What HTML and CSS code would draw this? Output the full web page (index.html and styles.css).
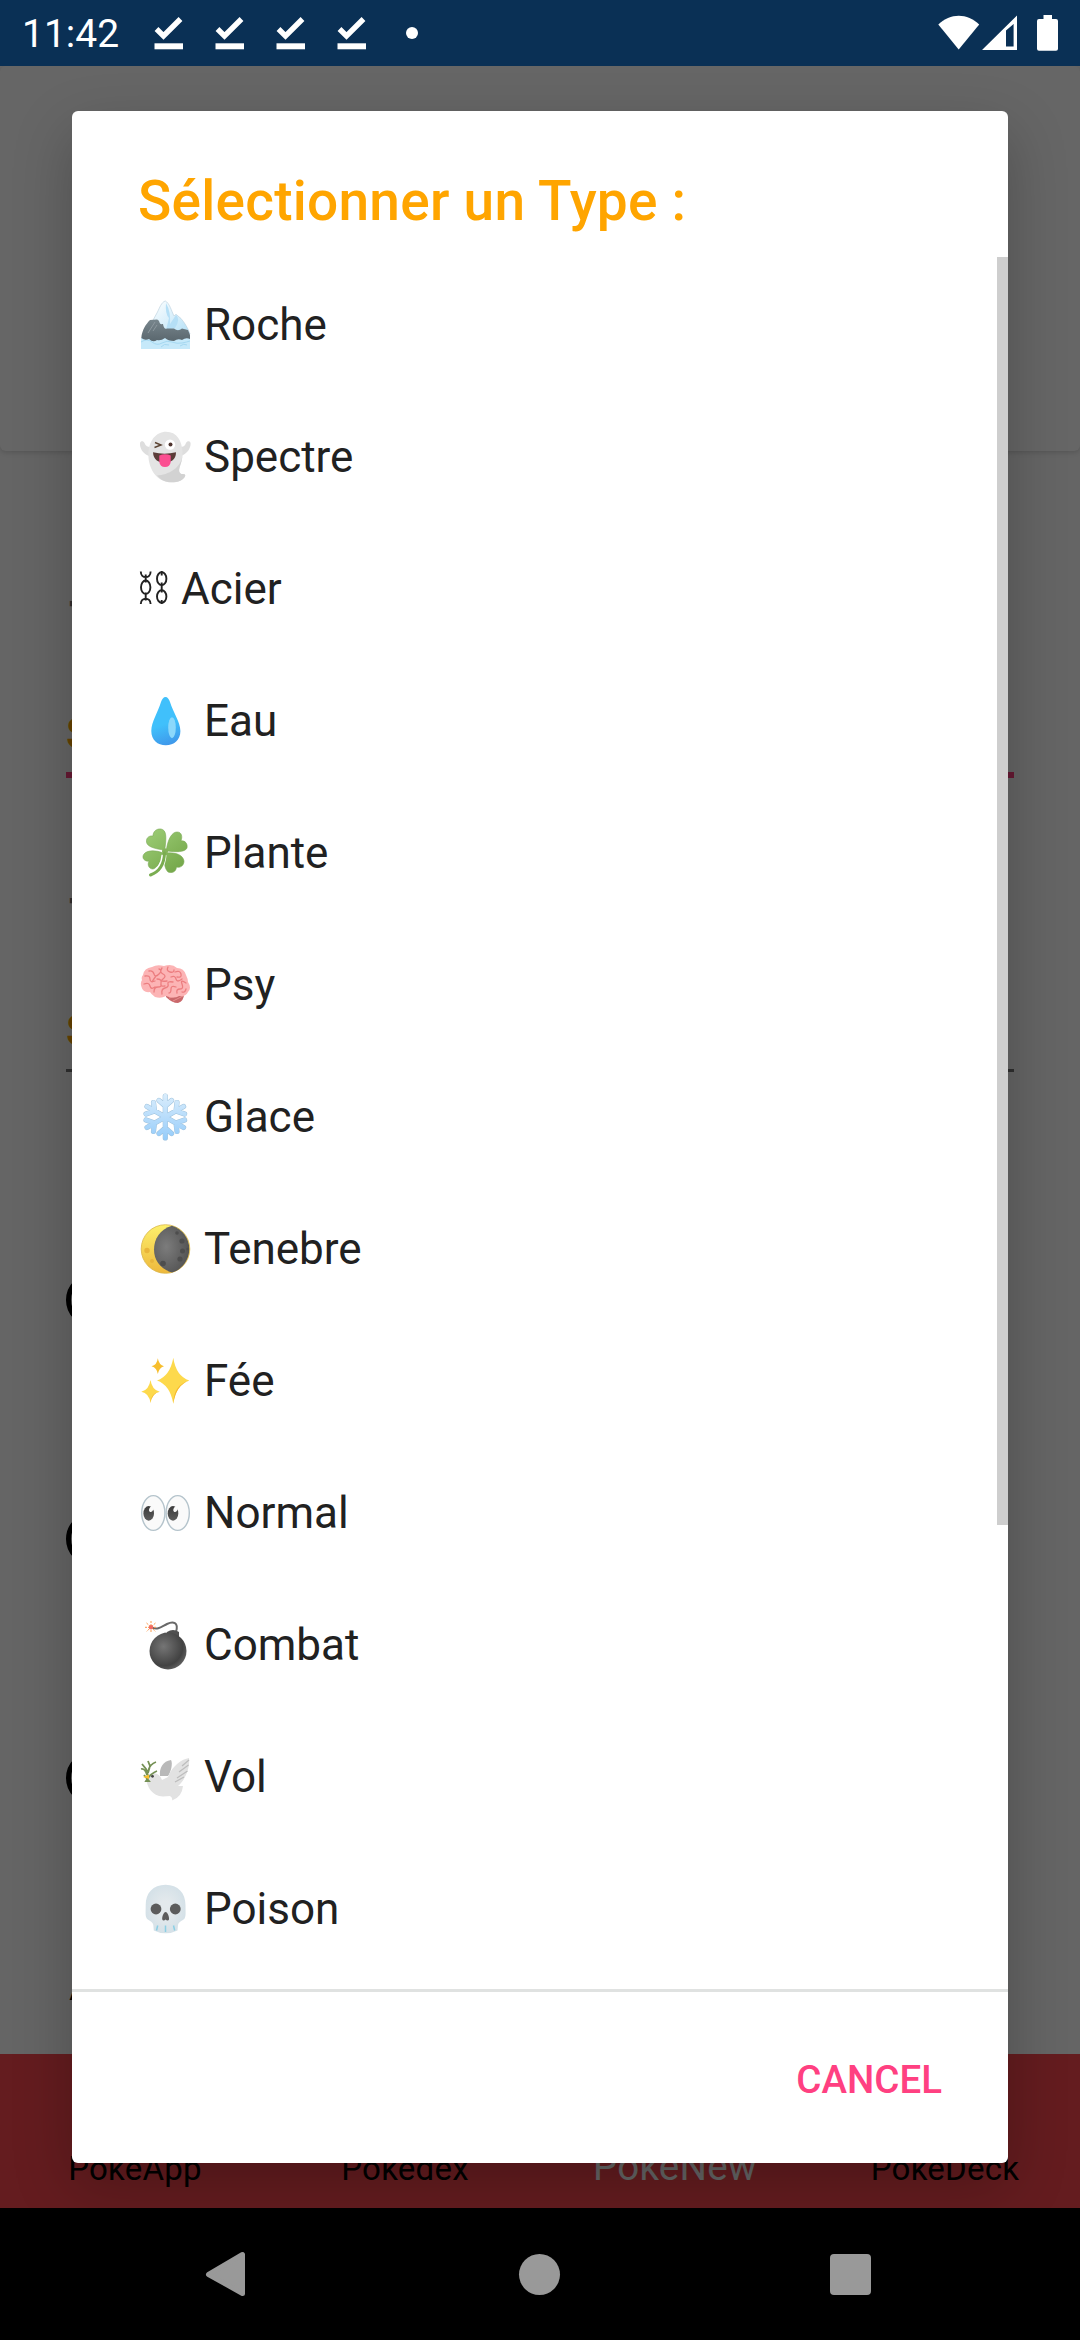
FILE: index.html
```html
<!DOCTYPE html>
<html lang="fr">
<head>
<meta charset="utf-8">
<title>PokeApp</title>
<link rel="stylesheet" href="styles.css">
</head>
<body>
<svg class="defs" aria-hidden="true">
  <defs>
    <symbol id="done" viewBox="0 0 30 36"><path d="M2.500 14 9.500 21 26.500 4" fill="none" stroke="#fff" stroke-width="5.400"/><path d="M.5 28.300h28.500v6H.5z" fill="#fff"/></symbol>
    <linearGradient id="gIce" x1="0" y1="0" x2="1" y2="1"><stop offset="0" stop-color="#fff"/><stop offset="1" stop-color="#b3e0f7"/></linearGradient>
    <linearGradient id="gRock" x1="0" y1="0" x2="0" y2="1"><stop offset="0" stop-color="#78868d"/><stop offset="1" stop-color="#5a676e"/></linearGradient>
    <linearGradient id="gDrop" x1="0.400" y1="0" x2="0.600" y2="1"><stop offset=".55" stop-color="#40c0fb"/><stop offset="1" stop-color="#3f97ea"/></linearGradient>
    <linearGradient id="gLeaf" gradientUnits="userSpaceOnUse" x1="8" y1="4" x2="42" y2="46"><stop offset="0" stop-color="#9ccc75"/><stop offset="1" stop-color="#72a547"/></linearGradient>
    <linearGradient id="gSnow" gradientUnits="userSpaceOnUse" x1="0" y1="2" x2="0" y2="50"><stop offset="0" stop-color="#dceefc"/><stop offset="1" stop-color="#93cbfa"/></linearGradient>
    <linearGradient id="gMoon" x1="0" y1="0" x2="0" y2="1"><stop offset="0" stop-color="#fdf06c"/><stop offset="1" stop-color="#eeb83c"/></linearGradient>
    <radialGradient id="gDark" cx=".35" cy=".45" r=".7"><stop offset="0" stop-color="#7c7c7c"/><stop offset="1" stop-color="#515151"/></radialGradient>
    <radialGradient id="gBomb" cx=".38" cy=".38" r=".65"><stop offset="0" stop-color="#757575"/><stop offset=".8" stop-color="#424242"/><stop offset="1" stop-color="#5c5c5c"/></radialGradient>
    <radialGradient id="gSkull" cx=".5" cy=".5" r=".55"><stop offset=".3" stop-color="#e3e9ec"/><stop offset="1" stop-color="#d3e0e7"/></radialGradient>
    <linearGradient id="gPupil" x1="0" y1="0" x2="0" y2="1"><stop offset="0" stop-color="#3c3c3c"/><stop offset="1" stop-color="#5c5c5c"/></linearGradient>
  </defs>
</svg>

<header class="status">
  <span class="clock">11:42</span>
  <div class="notifs">
    <svg class="done"><use href="#done"/></svg>
    <svg class="done"><use href="#done"/></svg>
    <svg class="done"><use href="#done"/></svg>
    <svg class="done"><use href="#done"/></svg>
    <span class="more"></span>
  </div>
  <svg class="signals" viewBox="938 14 121 38" fill="#fff">
    <path d="M938.300 24.500C950 12.700 967.500 12.700 979.200 24.500L958.700 49.500z"/>
    <path fill-rule="evenodd" d="M982 50 1017 15.500V50zM1006 30.500V46.500H1013.600V24z"/>
    <path d="M1043.500 15h8.500v4h4q2 0 2 2v27.700q0 2-2 2h-17q-2 0-2-2V21q0-2 2-2h4.500z"/>
  </svg>
</header>

<main class="app">
  <section class="hero"></section>
  <section class="form">
    <div class="label">T</div>
    <div class="field active">S</div>
    <div class="label second">T</div>
    <div class="field">S</div>
    <div class="radios"><span class="radio"></span><span class="radio"></span><span class="radio"></span></div>
    <div class="add">A</div>
  </section>
  <nav class="tabs">
    <span class="tab">PokeApp</span>
    <span class="tab">Pokedex</span>
    <span class="tab current">PokeNew</span>
    <span class="tab">PokeDeck</span>
  </nav>

  <div class="scrim">
    <div class="dialog" role="dialog">
      <h1 class="title">Sélectionner un Type :</h1>
      <ul class="list">
        <li class="row"><svg class="emoji" viewBox="0 0 52 52">
          <path d="M2 39 2 50H51V38z" fill="#c6e9fa"/>
          <path d="M2 43q6-4 11 0t10 1 10-1 10 1 8-2M22 48q3-4 8-2M41 47q4-3 7-1" fill="none" stroke="#a5d8f1" stroke-width="1"/>
          <path d="M26.300 2C22.500 3 20.500 9 18.500 13L13 23 25 34 51 35C49 29 45 23 42 19.500L37 15.300 35 17C32.500 12 30.500 4 26.300 2z" fill="url(#gIce)" stroke="#bed3df" stroke-width=".7"/>
          <path d="M27 4Q26 15 30 19L27 31 36 29Q42 20 37 16L31 25Q32 13 27 4z" fill="#b5dff6"/>
          <path d="M2.300 39C3 31 7 25 11 21L18 20.500C22 22 19 26 24 25Q25 31 28 29.500L35 29.500Q39 33 43 29.500L49 31 51 36V40Q47 38 43 41 39 39 35 42 29 42 26 39 22 42 18 41 14 44 10 40 6 42 2.300 39z" fill="url(#gRock)"/>
          <path d="M9 34 16 23M14 32 18 26" stroke="#8d989e" stroke-width="1"/>
        </svg>Roche</li>
        <li class="row"><svg class="emoji" viewBox="0 0 52 52">
          <path d="M10 25C4 23 .5 17 1 12 1.600 9.500 4.500 9.500 5.500 12 6.500 15 9 16 11 16zM42 25C48 23 52 17 51.600 12 51 9.500 48 9.500 47 12 46 15 44 16 41 16z" fill="#dedede"/>
          <path d="M27 .8C38 .8 43 10 43.500 21 44 32 38 38 41 42 42.500 44 46 42 46.300 44.500 45 49.500 38 51.500 32 51.300 17 51 9.500 37 9.400 24 9.400 10 17 .8 27 .8z" fill="#e4e4e4"/>
          <path d="M43.500 23C43 37 29 44 18 44.500 22 49 26 51.300 32 51.300 38 51.500 45 49.500 46.300 44.500 46 42 42.500 44 41 42 38 38 43.500 33 43.500 23z" fill="#d2d2d2"/>
          <circle cx="31" cy="13.600" r="5.200" fill="#fff"/><circle cx="31.500" cy="13.600" r="2" fill="#4e342e"/>
          <path d="M16 11.500 22 14 15.500 16.500" fill="none" stroke="#5b4332" stroke-width="1.400"/>
          <path d="M14 21.300Q25.500 24 37 21.300C37 29 32 31.500 25.500 31.500S14.500 29 14 21.300z" fill="#5b3c38"/>
          <path d="M20.300 24.500Q26 22 31.700 24.500V31Q31 36 26 36T20.300 31z" fill="#fb4f91"/>
        </svg>Spectre</li>
        <li class="row"><svg class="emoji chains" viewBox="0 0 29 52" fill="none" stroke="#212121" stroke-width="1.900">
          <path d="M1.800 8.500C1.800 16 11.600 16 11.600 8.500M6.700 11.500V19.500M6.700 29.500V37.500M1.800 41C1.800 34 11.600 34 11.600 41M22.700 8V12.500M22.700 19.500V29.500M22.700 37V41"/>
          <ellipse cx="6.700" cy="24.200" rx="4.700" ry="6.700"/><ellipse cx="22.700" cy="15.700" rx="4.700" ry="6.400"/><ellipse cx="22.700" cy="33.500" rx="4.700" ry="6.200"/>
        </svg>Acier</li>
        <li class="row"><svg class="emoji" viewBox="0 0 52 52">
          <path d="M26.500 2C28.500 2 30 4 31 7 34 17 41.400 27 41.400 36 41.400 45 35 50.300 26.800 50.300S12.300 45 12.300 36C12.300 27 19 17 22 7 23 4 24.500 2 26.500 2z" fill="url(#gDrop)"/>
          <ellipse cx="33" cy="32.700" rx="3.800" ry="10.500" fill="#8bd8fb"/>
        </svg>Eau</li>
        <li class="row"><svg class="emoji" viewBox="0 0 52 52">
          <g fill="url(#gLeaf)" stroke="#7aa956" stroke-width=".6">
          <path d="M25 23C17 22 8 20 7.500 15 7 10 11 8.500 14 9 14 4 18 1.500 22 2 27.500 3 27.500 10 26 21z"/>
          <path d="M27.500 22C29 12 33 5 38 5 43 5 43.500 10 42 14 46 13 49 17 48 21 46 25.500 36 25 28 24z"/>
          <path d="M24 26C17 23 8 23 5 27 2 31 6 35 10 34 8 38 10 42 14 42 19 41 22 33 25 27z"/>
          <path d="M27 26C37 25 44 28 45 34 45 39 41 41 37.500 40 37 45 33 46.500 29 45 25 41 25 34 26 26z"/></g>
          <circle cx="26" cy="24.300" r="3" fill="#84b45b"/>
          <path d="M25 28Q24 43 11 48" fill="none" stroke="#fff" stroke-width="5"/>
          <path d="M25.500 26Q25 43 11.500 48" fill="none" stroke="#7aad51" stroke-width="3" stroke-linecap="round"/>
        </svg>Plante</li>
        <li class="row"><svg class="emoji" viewBox="0 0 52 52">
          <path d="M27 37Q35 37 45 35 45 42 39 44 33 44 27 38z" fill="#c9686b"/><path d="M30 39 42 36M34 42 44 37" stroke="#e98e8e" stroke-width="1"/>
          <path d="M4 16Q5 9 13 8 18 5 25 7 33 4 38 9 45 9 47 16 49 20 49 23 53 29 49 33 47 38 40 37 35 40 27 37 22 40 16 38 12 35 11 33 4 34 2.500 28 1 24 3 21 2 18 4 16z" fill="#fcb4b5"/>
          <g fill="none" stroke="#ec7e80" stroke-width="1.300" stroke-linecap="round"><path d="M6 17q5-1 5 3t5 2M10 12q4-1 5 3t5 0 0-5M23 9q-3 4 1 6t0 5 4 2M29 8q-2 4 2 5t4-2M36 13q5-2 6 2t-4 3M32 18q4-2 5 2t6 0M5 25q5-2 6 2t5 1M18 20q5 0 4 4t4 3M15 33q0-5 4-5t3-3M23 35q-1-5 3-6t3-4 5-2M30 34q2 0 2-4t5-2M38 34q-1-4 3-4t2-5 4-1M17 17q-3 4-4 6M43 33q3 1 4-3"/></g>
        </svg>Psy</li>
        <li class="row"><svg class="emoji" viewBox="0 0 52 52">
          <g fill="none" stroke-linecap="round" stroke-linejoin="round">
          <path d="M26.300 5V47M8 15.500 44.600 36.500M8 36.500 44.600 15.500M20 9.500 26.300 15 32.600 9.500M20 42.500 26.300 37 32.600 42.500M7 23 15.500 20 14.500 11.500M45.600 29 37 32 38 40.500M7 29 15.500 32 14.500 40.500M45.600 23 37 20 38 11.500" stroke="#9fc2dc" stroke-width="5.200"/>
          <path d="M26.300 5V47M8 15.500 44.600 36.500M8 36.500 44.600 15.500M20 9.500 26.300 15 32.600 9.500M20 42.500 26.300 37 32.600 42.500M7 23 15.500 20 14.500 11.500M45.600 29 37 32 38 40.500M7 29 15.500 32 14.500 40.500M45.600 23 37 20 38 11.500" stroke="url(#gSnow)" stroke-width="4.300"/></g>
        </svg>Glace</li>
        <li class="row"><svg class="emoji" viewBox="0 0 52 52">
          <circle cx="26.500" cy="26" r="24.300" fill="url(#gMoon)" stroke="#d9b64a" stroke-width=".8"/>
          <circle cx="8" cy="27.500" r="2.700" fill="#e9b53b"/><circle cx="13" cy="38" r="2" fill="#e9b53b"/>
          <path d="M33 2.700A24.500 24.500 0 0 1 33 49.500C21 46 15 37 15 26.500 15 16 21 6 33 2.700z" fill="url(#gDark)"/>
          <g fill="#4d4d4d"><circle cx="38" cy="10" r="1.800"/><circle cx="43" cy="18" r="2.600"/><circle cx="43.500" cy="28" r="2.500"/><circle cx="41" cy="36" r="2.600"/><circle cx="24" cy="40.500" r="2.800"/><circle cx="48.500" cy="26" r="1.200"/></g>
        </svg>Tenebre</li>
        <li class="row"><svg class="emoji" viewBox="0 0 52 52">
          <path d="M34.300 2.700Q37 21 50.300 25.500 37 30 34.300 48.700 31 30 18 25.500 31 21 34.300 2.700z" fill="#fdd94c"/>
          <path d="M50.300 25.500Q37 30 34.300 48.700 34.500 30 50.300 25.500z" fill="#f5b62c"/>
          <path d="M11.500 25Q13 35 20.700 36.700 13 38 11.500 48 10 38 2.300 36.700 10 35 11.500 25z" fill="#fdd94c"/><path d="M20.700 36.700Q13 38 11.500 48 11.500 38 20.700 36.700z" fill="#f5b62c"/>
          <path d="M18.800 3.300Q20 10 25 11.300 20 13 18.800 19 18 13 12.500 11.300 18 10 18.800 3.300z" fill="#f7be2d"/>
        </svg>Fée</li>
        <li class="row"><svg class="emoji" viewBox="0 0 52 52">
          <g fill="#fafafa" stroke="#b5c4cc" stroke-width="1.400"><ellipse cx="14.300" cy="26" rx="11.600" ry="17.400"/><ellipse cx="38.700" cy="26" rx="11.600" ry="17.400"/></g>
          <g fill="url(#gPupil)"><ellipse cx="9.700" cy="26.400" rx="5.300" ry="7.300"/><ellipse cx="34" cy="26.400" rx="5.300" ry="7.300"/></g>
          <g fill="#fafafa"><ellipse cx="12.300" cy="22.200" rx="2" ry="3" transform="rotate(25 12.300 22.200)"/><ellipse cx="36.600" cy="22.200" rx="2" ry="3" transform="rotate(25 36.600 22.200)"/></g>
        </svg>Normal</li>
        <li class="row"><svg class="emoji" viewBox="0 0 52 52">
          <path d="M37 13C40 3 34 2 28 5 22 8 19 11 13 8.500" fill="none" stroke="#686868" stroke-width="2"/>
          <path d="M28 13Q34 9 40 13V20H28z" fill="#505050"/><circle cx="29" cy="32" r="18.500" fill="url(#gBomb)"/>
          <path d="M12 2V14M6 8.300H18M7.500 4 16.500 12.500M16.500 4 7.500 12.500" stroke="#fb9a4b" stroke-width="1" stroke-dasharray="2 1"/><circle cx="12" cy="8.300" r="2.200" fill="#f26a62"/>
        </svg>Combat</li>
        <li class="row"><svg class="emoji" viewBox="0 0 52 52">
          <path d="M21 25C20 17 24 10 32 9 34 12 32 21 29 25z" fill="#b9b9b9"/>
          <path d="M50 7C43 8 33 15 29 26L23 29Q20 21 13 22.500 8 23 7 27C8 36 13 45 24 45.500L31 45Q34 47 33 49.500 43 46 44 35L39 35C48 27 51 15 50 7z" fill="#e2e2e2"/>
          <path d="M49.500 14 40 21M48.500 20 38 27M45 26 36 31M50 9 43 15" stroke="#bdbdbd" stroke-width="1.300"/>
          <path d="M5 24 10 30 7 30Q12 22 18 20M3 13 7 18 9 25M9 10 11 15 9 22M17 11Q11 13 9 20M2 18Q6 17 8 24M8 27 8 31" fill="none" stroke="#759155" stroke-width="1.800"/>
          <path d="M4 26 10 23.500V28z" fill="#fbc02d"/><circle cx="13.500" cy="25.300" r="1.400" fill="#424242"/>
        </svg>Vol</li>
        <li class="row"><svg class="emoji" viewBox="0 0 52 52">
          <path d="M26.600 1.700C39 1.700 46.500 10 46.500 22 46.500 29 47 32 46 34.500 45 38 39.500 38 39 42L38.500 47.500Q33 50.300 26.600 50.300T14.800 47.500L14.300 42C14 38 8.500 38 7.300 34.500 6.300 32 6.700 29 6.700 22 6.700 10 14 1.700 26.600 1.700z" fill="url(#gSkull)"/>
          <path d="M18.700 42.500 17.500 47.500M26.500 42.500V49M34.500 42.500 35.700 47.500" stroke="#8ccfe4" stroke-width="1.500"/>
          <circle cx="17" cy="26" r="5.400" fill="#5c5c5c"/><circle cx="36.300" cy="26" r="5.400" fill="#5c5c5c"/>
          <path d="M26.600 29C28.500 29 30.500 34 30 36.500 29.500 38 27.500 37.500 26.600 36.500 25.700 37.500 23.700 38 23.300 36.500 22.800 34 24.700 29 26.600 29z" fill="#5c5c5c"/>
        </svg>Poison</li>
      </ul>
      <span class="thumb"></span>
      <footer class="actions"><button class="cancel">CANCEL</button></footer>
    </div>
  </div>
</main>

<footer class="sysnav">
  <svg class="key" viewBox="0 0 44 48"><path d="M4.500 24.500 38.500 4.500V43.500z" fill="#999" stroke="#999" stroke-width="5" stroke-linejoin="round"/></svg>
  <span class="home"></span>
  <span class="recent"></span>
</footer>
</body>
</html>
```
FILE: styles.css
```css
* { box-sizing: border-box; }
body { margin: 0; width: 1080px; height: 2340px; display: flex; flex-direction: column; overflow: hidden; font-family: Roboto, sans-serif; background: #000; }
.defs { position: absolute; width: 0; height: 0; }

.status { height: 66px; flex: none; background: #0a3055; color: #fff; display: flex; align-items: center; padding: 0 21px 0 22px; }
.clock { font-size: 39px; line-height: 66px; width: 132px; padding-top: 2px; }
.notifs { display: flex; align-items: center; gap: 31px; flex: 1; }
.done { width: 30px; height: 36px; }
.more { width: 12px; height: 12px; border-radius: 50%; background: #fff; margin-left: 8px; }
.signals { width: 121px; height: 38px; }

.app { position: relative; height: 2142px; flex: none; overflow: hidden; background: #fcfcfc; display: flex; flex-direction: column; }
.hero { height: 385px; flex: none; background: #fff; border-radius: 6px; box-shadow: 0 2px 5px rgba(0, 0, 0, .14); }
.form { flex: 1; display: flex; flex-direction: column; padding: 141px 66px 0; font-size: 44px; }
.label { padding-left: 3px; height: 116px; line-height: 52px; font-weight: 700; color: #757575; }
.label.second { margin-top: 111px; }
.field { height: 67px; line-height: 52px; color: #ffa500; font-weight: 700; border-bottom: 3px solid #757575; }
.field.active { height: 70px; border-bottom: 6px solid #ff4081; }
.radios { display: flex; flex-direction: column; gap: 185px; padding-top: 201px; }
.radio { width: 54px; height: 54px; border: 5px solid #000; border-radius: 50%; }
.add { padding: 154px 0 0 3px; line-height: 52px; color: #000; }

.tabs { height: 154px; flex: none; background: #fa464e; display: flex; align-items: baseline; padding-top: 93px; font-size: 33px; line-height: 39px; color: #000; }
.tab { flex: 1; text-align: center; letter-spacing: .25px; }
.tab.current { font-size: 38.500px; color: #fff; }

.scrim { position: absolute; inset: 0; background: rgba(0, 0, 0, .6); padding: 45px 72px; }
.dialog { position: relative; height: 2052px; background: #fff; border-radius: 6px; box-shadow: 0 22px 60px rgba(0, 0, 0, .24); display: flex; flex-direction: column; }
.title { margin: 0; height: 146px; flex: none; padding: 34px 66px 0; font-size: 55px; line-height: 112px; font-weight: 500; letter-spacing: .25px; color: #ffa500; }
.list { margin: 0; padding: 2px 0 0 67px; height: 1732px; flex: none; overflow: hidden; list-style: none; }
.row { height: 132px; display: flex; align-items: center; gap: 13px; font-size: 44px; line-height: 132px; color: #212121; }
.emoji { width: 52px; height: 52px; flex: none; }
.chains { width: 29px; }
.thumb { position: absolute; right: 0; top: 146px; width: 11px; height: 1268px; background: #cecece; }
.actions { height: 174px; flex: none; border-top: 3px solid #e0e2e1; display: flex; justify-content: flex-end; align-items: center; padding: 5px 66px 0 0; }
.cancel { border: 0; padding: 0; background: none; font: 500 38.500px/46px Roboto, sans-serif; color: #ff4081; }

.sysnav { height: 132px; flex: none; display: flex; align-items: center; padding: 0 209px 0 204px; justify-content: space-between; }
.key { width: 44px; height: 48px; }
.home { width: 41px; height: 41px; border-radius: 50%; background: #999; }
.recent { width: 41px; height: 41px; border-radius: 4px; background: #999; }
```
